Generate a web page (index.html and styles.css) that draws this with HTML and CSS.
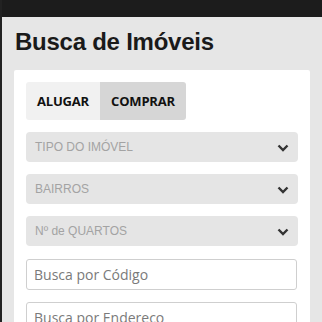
FILE: index.html
```html
<!DOCTYPE html>
<html>

	<head>
		<meta charset="UTF-8">
		<title>Busca de Imóveis</title>
		<link rel="stylesheet" href="styles.css">
	</head>

	<body>
		<div class="topo"></div>
		<div class="conteudo">
			<h1 class="titulo">Busca de Imóveis</h1>
			<div class="painel">
				<div class="abas">
					<a href="javascript:;" class="aba">ALUGAR</a>
					<a href="javascript:;" class="aba ativa">COMPRAR</a>
				</div>
				<div class="campo-select">
					<span>TIPO DO IMÓVEL</span>
					<svg class="seta" width="12" height="8" viewBox="0 0 12 8"><path d="M1.5 1.5 L6 6 L10.5 1.5" fill="none" stroke="#333" stroke-width="2.4"/></svg>
				</div>
				<div class="campo-select">
					<span>BAIRROS</span>
					<svg class="seta" width="12" height="8" viewBox="0 0 12 8"><path d="M1.5 1.5 L6 6 L10.5 1.5" fill="none" stroke="#333" stroke-width="2.4"/></svg>
				</div>
				<div class="campo-select ultimo">
					<span>Nº de QUARTOS</span>
					<svg class="seta" width="12" height="8" viewBox="0 0 12 8"><path d="M1.5 1.5 L6 6 L10.5 1.5" fill="none" stroke="#333" stroke-width="2.4"/></svg>
				</div>
				<input class="campo-texto" type="text" placeholder="Busca por Código">
				<input class="campo-texto" type="text" placeholder="Busca por Endereço">
			</div>
		</div>
	</body>

</html>
```

FILE: styles.css
```css
* {
	margin: 0;
	padding: 0;
	box-sizing: border-box;
}

html,
body {
	height: 100%;
	overflow: hidden;
}

body {
	font-family: "Liberation Sans", Arial, sans-serif;
	background: #e6e6e6;
	border-left: 2px solid #222;
	color: #222;
}

a {
	text-decoration: none;
	color: #111;
}

.topo {
	height: 17px;
	background: #1c1c1c;
}

.conteudo {
	padding: 0 12px 0 12px;
}

.titulo {
	font-size: 24px;
	font-weight: bold;
	letter-spacing: -0.25px;
	color: #1a1a1a;
	line-height: 28px;
	padding: 11px 0 0 1px;
	height: 53px;
}

.painel {
	background: #fff;
	border-radius: 2px;
	padding: 12px 12px 0 12px;
	height: 260px;
}

.abas {
	display: flex;
	width: 160px;
	height: 38px;
	border-radius: 3px;
	overflow: hidden;
	margin-bottom: 12px;
}

.aba {
	font-family: "Open Sans", sans-serif;
	font-weight: bold;
	font-size: 13px;
	letter-spacing: -0.2px;
	display: flex;
	align-items: center;
	justify-content: center;
	background: #f1f1f1;
	width: 74px;
}

.aba.ativa {
	background: #d6d6d6;
	width: 86px;
}

.campo-select {
	display: flex;
	align-items: center;
	justify-content: space-between;
	height: 30px;
	width: 272px;
	background: #e5e5e5;
	border-radius: 4px;
	padding: 0 6px 0 9px;
	margin-bottom: 12px;
	font-size: 12px;
	color: #a3a3a3;
}

.campo-select.ultimo {
	margin-bottom: 13px;
}

.seta {
	margin-right: 3px;
	margin-top: 2px;
}

.campo-texto {
	display: block;
	width: 271px;
	height: 31px;
	border: 1px solid #cfcfcf;
	border-radius: 3px;
	padding: 0 7px;
	margin-bottom: 12px;
	font-family: "Open Sans", sans-serif;
	font-size: 14px;
	outline: none;
}

.campo-texto::placeholder {
	color: #7a7a7a;
}
```
